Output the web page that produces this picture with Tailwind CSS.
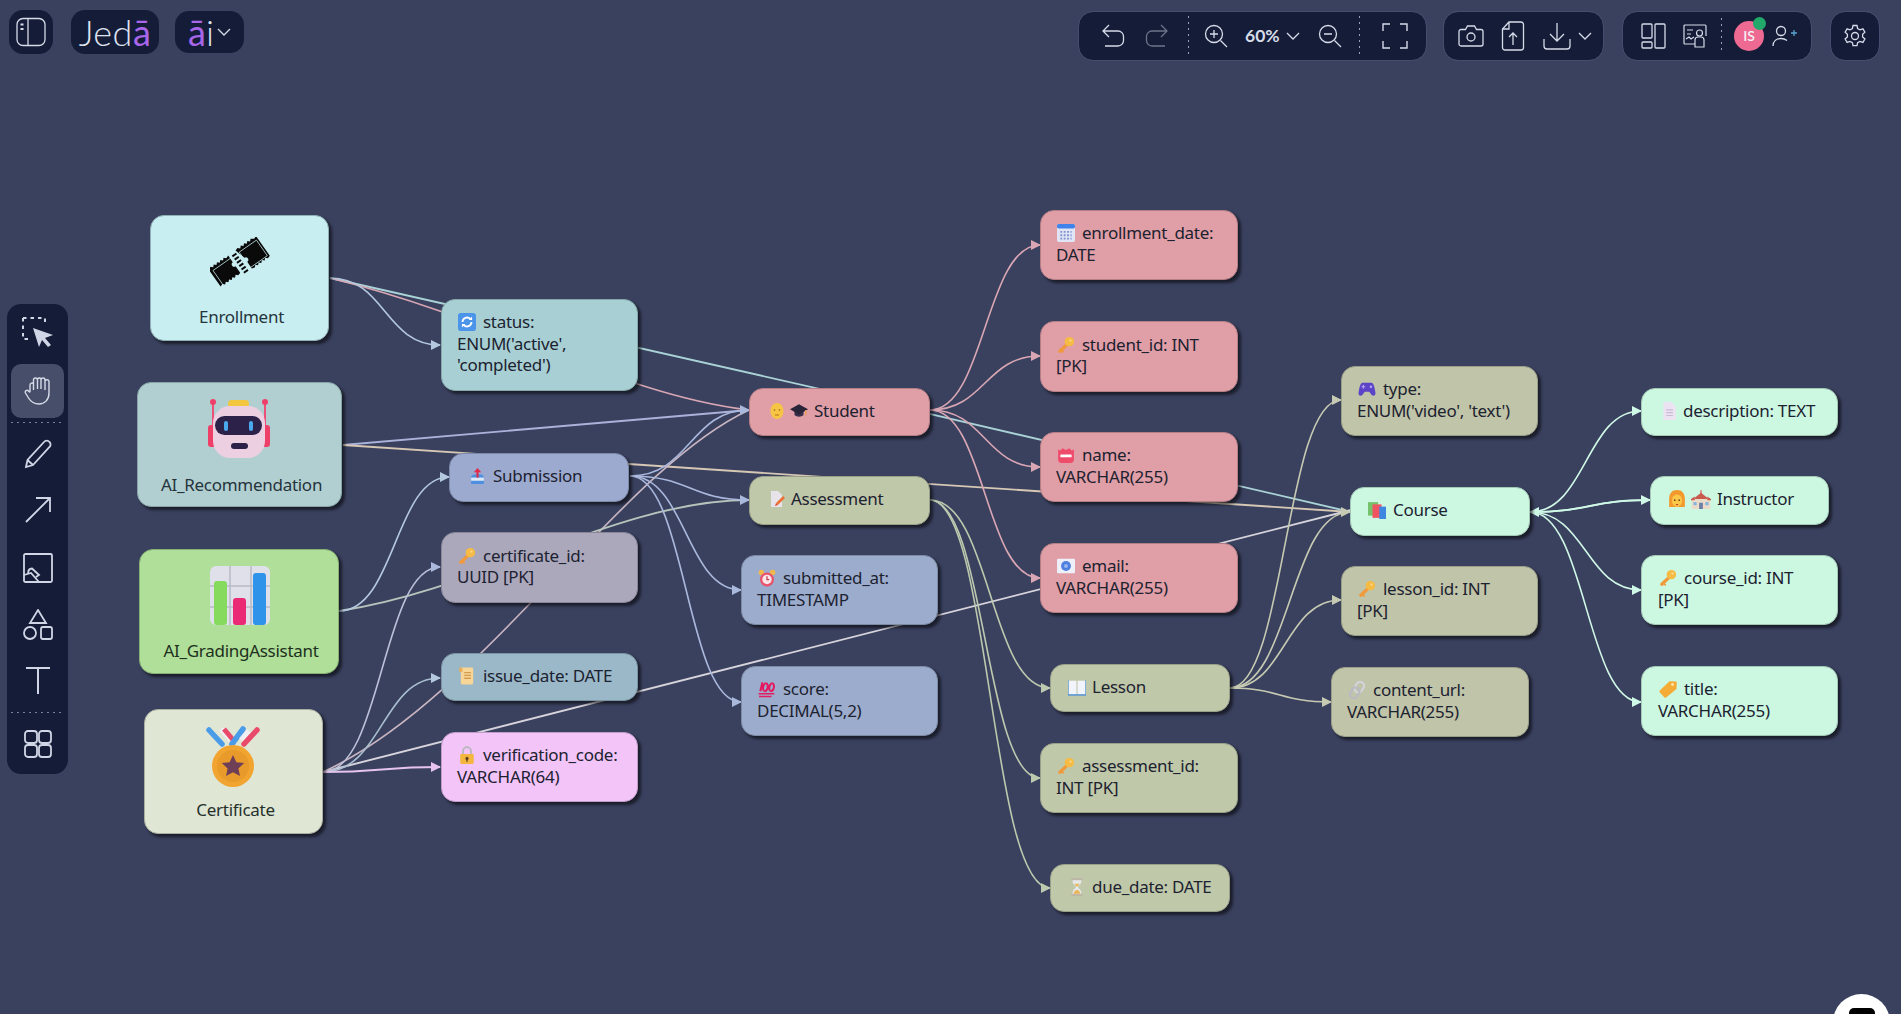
<!DOCTYPE html>
<html lang="en">
<head>
<meta charset="utf-8">
<title>Jedā</title>
<script src="https://cdn.jsdelivr.net/npm/@tailwindcss/browser@4"></script>
</head>
<body class="m-0">
<div class="relative w-[1901px] h-[1014px] overflow-hidden bg-[#3a415f] font-['Noto_Sans',sans-serif] text-[17px] tracking-[-0.28px] leading-[21.5px] text-[#1c2230]">

<!-- symbols -->
<svg class="absolute w-0 h-0">
<defs>
<symbol id="key" viewBox="0 0 16 16"><path d="M9.5 7 L2.5 13.5" stroke="#f09a3c" stroke-width="3" stroke-linecap="round" fill="none"/><path d="M4 12.5l2 2" stroke="#f09a3c" stroke-width="1.6"/><circle cx="11" cy="5" r="4.2" fill="#f6bb45"/><circle cx="12" cy="4" r="1" fill="#f9dc8c"/></symbol>
<symbol id="refresh" viewBox="0 0 16 16"><rect x="0" y="0" width="16" height="16" rx="2.5" fill="#4a94ea"/><path d="M4 8a4 4 0 0 1 7-2.6M12 8a4 4 0 0 1-7 2.6" stroke="#fff" stroke-width="1.6" fill="none"/><path d="M9.5 6.2h3v-3zM6.5 9.8h-3v3z" fill="#fff"/></symbol>
<symbol id="calendar" viewBox="0 0 16 16"><rect x="0" y="0" width="16" height="16" rx="1.5" fill="#dfe5f5"/><rect x="0" y="0" width="16" height="4" rx="1.5" fill="#3f82ea"/><path d="M3 7h10M3 10h10M3 13h10" stroke="#7f8fd0" stroke-width="1.6" stroke-dasharray="1.6 1.4"/></symbol>
<symbol id="scroll" viewBox="0 0 16 16"><rect x="2.5" y="0.5" width="11" height="15" rx="1" fill="#f6d597"/><rect x="1" y="0.5" width="3" height="4" rx="1.2" fill="#e7ae5c"/><path d="M5.5 5h6M5.5 7.5h6M5.5 10h6" stroke="#d49c52" stroke-width="1.2"/></symbol>
<symbol id="lock" viewBox="0 0 16 16"><path d="M4.5 8V4.5a3.5 3.5 0 0 1 7 0V8" stroke="#b8b8bc" stroke-width="1.6" fill="none"/><rect x="2" y="7" width="12" height="9" rx="1.3" fill="#f4b63e"/><circle cx="8" cy="11" r="1.4" fill="#5e4320"/><rect x="7.4" y="11" width="1.2" height="3" fill="#5e4320"/></symbol>
<symbol id="clock" viewBox="0 0 16 16"><circle cx="3" cy="3" r="2.4" fill="#f3b84c"/><circle cx="13" cy="3" r="2.4" fill="#f3b84c"/><circle cx="8" cy="9.3" r="6.2" fill="#e8526a"/><circle cx="8" cy="9.3" r="4.2" fill="#fbe6ea"/><path d="M8 6.5v3h2" stroke="#c43a52" stroke-width="1.1" fill="none"/></symbol>
<symbol id="hundred" viewBox="0 0 16 16"><path d="M2 10 L4 2 M6 10 a2 3.6 12 1 1 .1 0 M11.5 10 a2 3.6 12 1 1 .1 0" stroke="#e5195f" stroke-width="1.8" fill="none"/><path d="M0.5 12.2h14M1 14.6h11" stroke="#e5195f" stroke-width="1.3"/></symbol>
<symbol id="book" viewBox="0 0 16 16"><path d="M0.5 2.5h7v12h-7zM8.5 2.5h7v12h-7z" fill="#f1f4fa"/><path d="M0 14.5h16v1.2H0z" fill="#4a90e0"/><path d="M0 2v13M16 2v13" stroke="#4a90e0" stroke-width="1"/></symbol>
<symbol id="hourglass" viewBox="0 0 16 16"><path d="M3 1h10M3 15h10" stroke="#bdb7a6" stroke-width="1.8"/><path d="M4 2h8c0 4-3 4.500-3 6s3 2 3 6H4c0-4 3-4.500 3-6s-3-2-3-6z" fill="#e6e8ea"/><path d="M5.500 5h5l-2.500 3zM4.800 14c.5-2 2-3 3.200-3.500 1.200.5 2.700 1.500 3.200 3.500z" fill="#e9b759"/></symbol>
<symbol id="docpen" viewBox="0 0 16 16"><path d="M1 0h7l4 4v12H1z" fill="#e6e3ea"/><path d="M7 13 L14 6" stroke="#ee7035" stroke-width="2.6"/><path d="M5 15l1-3 2 2z" fill="#e44b2a"/></symbol>
<symbol id="face" viewBox="0 0 16 16"><ellipse cx="8" cy="8" rx="6.500" ry="8" fill="#f6c544"/><circle cx="5.500" cy="7" r=".8" fill="#8a5a20"/><circle cx="10.500" cy="7" r=".8" fill="#8a5a20"/><path d="M6 12h4" stroke="#b9721f" stroke-width="1"/></symbol>
<symbol id="cap" viewBox="0 0 16 16"><path d="M4 8v3.500c2 2 6 2 8 0V8z" fill="#3a2f4a"/><path d="M0 6.500 8 2l8 4.500L8 11z" fill="#2a2438"/><path d="M14 7v5" stroke="#e8a34a" stroke-width="1.100"/></symbol>
<symbol id="badge" viewBox="0 0 16 16"><path d="M1 3l2 1 2-2 3 1.500L11 2l2 2 2-1v9a3 3 0 0 1-3 3H4a3 3 0 0 1-3-3z" fill="#ef4c6b"/><rect x="3" y="7.500" width="10" height="2.600" rx=".6" fill="#fff"/></symbol>
<symbol id="globe" viewBox="0 0 16 16"><rect width="16" height="13" y="1.500" rx="1" fill="#edf0f8"/><circle cx="8" cy="8" r="4.400" fill="#4f7fdf"/><circle cx="8" cy="8" r="1.700" fill="#9cb9f0"/></symbol>
<symbol id="gamepad" viewBox="0 0 16 16"><path d="M4 2.500h8c2 0 3 5 3.500 9 .3 2.500-2.500 3.500-4 1L10 10.500H6L4.500 12.500c-1.500 2.500-4.300 1.500-4-1 .5-4 1.500-9 3.500-9z" fill="#5b44c8"/><circle cx="11.500" cy="6" r="1.100" fill="#b9a6f4"/><path d="M3 6h3.500M4.750 4.300v3.500" stroke="#b9a6f4" stroke-width="1"/></symbol>
<symbol id="books" viewBox="0 0 16 16"><rect x="0" y="1" width="9" height="12" fill="#76c26a"/><rect x="4" y="3" width="8" height="12" fill="#ef5560"/><rect x="10" y="5" width="6" height="11" fill="#3f86e0"/></symbol>
<symbol id="link" viewBox="0 0 16 16"><rect x="6.500" y="0.500" width="7" height="10" rx="3.500" transform="rotate(30 10 5.500)" stroke="#d4d5dc" stroke-width="1.800" fill="none"/><rect x="2.500" y="5.500" width="7" height="10" rx="3.500" transform="rotate(30 6 10.500)" stroke="#b9bac4" stroke-width="1.800" fill="none"/></symbol>
<symbol id="doc" viewBox="0 0 16 16"><path d="M3 0h7l4 4v12H3z" fill="#ebe2f2"/><path d="M5.500 7h6M5.500 9.500h6M5.500 12h6" stroke="#c9bcd6" stroke-width="1.100"/></symbol>
<symbol id="woman" viewBox="0 0 16 16"><path d="M8 0c4.500 0 7 3 7 8v7H1V8c0-5 2.500-8 7-8z" fill="#f29a2e"/><ellipse cx="8" cy="9.500" rx="4.500" ry="5.500" fill="#fbc84a"/><circle cx="6" cy="9" r=".8" fill="#7a4a1c"/><circle cx="10" cy="9" r=".8" fill="#7a4a1c"/><path d="M7 13h2" stroke="#c23a2a" stroke-width="1"/></symbol>
<symbol id="school" viewBox="0 0 16 16"><path d="M8 1 v3" stroke="#e25a5a" stroke-width="1"/><path d="M3 7 8 3l5 4v2H3z" fill="#c95a4e"/><rect x="0.500" y="8" width="15" height="8" fill="#eadcc8"/><path d="M0 8 3 6v3H0zM16 8l-3-2v3h3z" fill="#c95a4e"/><rect x="6.500" y="11" width="3" height="5" fill="#6d7fa5"/><rect x="2" y="10.500" width="2.500" height="2.500" fill="#7fb5e0"/><rect x="11.500" y="10.500" width="2.500" height="2.500" fill="#7fb5e0"/></symbol>
<symbol id="tag" viewBox="0 0 16 16"><path d="M9 1h5.500a1 1 0 0 1 1 1v5.500L7 15.500a1.500 1.500 0 0 1-2 0L1 11.500a1.500 1.500 0 0 1 0-2z" fill="#f5ac36" transform="rotate(3 8 8)"/><circle cx="12" cy="4" r="1.300" fill="#fde4a6"/></symbol>
<symbol id="inbox" viewBox="0 0 12 16"><path d="M0 8l2-2h8l2 2v7H0z" fill="#4d8fe0"/><path d="M0 9h12v3H0z" fill="#dfe8f5"/><path d="M6 9V3" stroke="#e02b4c" stroke-width="2"/><path d="M2.500 4 6 0l3.500 4z" fill="#e02b4c"/></symbol>
<marker id="ap" viewBox="0 0 10 10" refX="9" refY="5" markerWidth="10" markerHeight="10" markerUnits="userSpaceOnUse" orient="auto"><path d="M0 0 10 5 0 10z" fill="#d9a6b4"/></marker>
<marker id="al" viewBox="0 0 10 10" refX="9" refY="5" markerWidth="10" markerHeight="10" markerUnits="userSpaceOnUse" orient="auto"><path d="M0 0 10 5 0 10z" fill="#aab8dc"/></marker>
<marker id="ab" viewBox="0 0 10 10" refX="9" refY="5" markerWidth="10" markerHeight="10" markerUnits="userSpaceOnUse" orient="auto"><path d="M0 0 10 5 0 10z" fill="#b4c8de"/></marker>
<marker id="ag" viewBox="0 0 10 10" refX="9" refY="5" markerWidth="10" markerHeight="10" markerUnits="userSpaceOnUse" orient="auto"><path d="M0 0 10 5 0 10z" fill="#bcc9ae"/></marker>
<marker id="at" viewBox="0 0 10 10" refX="9" refY="5" markerWidth="10" markerHeight="10" markerUnits="userSpaceOnUse" orient="auto"><path d="M0 0 10 5 0 10z" fill="#c6cab2"/></marker>
<marker id="am" viewBox="0 0 10 10" refX="9" refY="5" markerWidth="10" markerHeight="10" markerUnits="userSpaceOnUse" orient="auto"><path d="M0 0 10 5 0 10z" fill="#d0f8e6"/></marker>
<marker id="av" viewBox="0 0 10 10" refX="9" refY="5" markerWidth="10" markerHeight="10" markerUnits="userSpaceOnUse" orient="auto"><path d="M0 0 10 5 0 10z" fill="#e6c4ee"/></marker>
</defs>
</svg>

<!-- edges -->
<svg class="absolute left-0 top-0 w-[1901px] h-[1014px]" viewBox="0 0 1901 1014" fill="none" stroke-width="1.6">
<path d="M330 278 C700 360 1000 430 1351 512" stroke="#a9d3d6" stroke-width="1.900"/>
<path d="M330 278 C500 320 620 395 749 410" stroke="#d9a6b4"/>
<path d="M343 445 L749 410" stroke="#aab2da" stroke-width="1.900"/>
<path d="M343 445 L1351 512" stroke="#d6c8b4" stroke-width="1.900"/>
<path d="M323 772 L1351 510" stroke="#d8d4dc" stroke-width="1.900"/>
<path d="M323 772 C480 700 620 470 749 410" stroke="#c9b6c2"/>
<path d="M339 611 C480 590 620 500 749 500" stroke="#b6c4bc" stroke-width="1.900"/>
<path d="M330 278 C385 278 385 345 440 345" stroke="#b4c8de" marker-end="url(#ab)"/>
<path d="M339 611 C395 611 395 477 449 477" stroke="#b4c8de" marker-end="url(#ab)"/>
<path d="M323 772 C382 772 382 567 440 567" stroke="#bcc0d8" marker-end="url(#al)"/>
<path d="M323 772 C382 772 382 678 440 678" stroke="#a9bfd0" marker-end="url(#ab)"/>
<path d="M323 772 C382 772 382 767 440 767" stroke="#e6c4ee" stroke-width="1.900" marker-end="url(#av)"/>
<path d="M630 476 C690 476 690 410 749 410" stroke="#aab8dc" marker-end="url(#al)"/>
<path d="M630 476 C690 476 690 500 749 500" stroke="#aab8dc" marker-end="url(#al)"/>
<path d="M630 476 C686 476 686 590 741 590" stroke="#aab8dc" marker-end="url(#al)"/>
<path d="M630 476 C686 476 686 702 741 702" stroke="#aab8dc" marker-end="url(#al)"/>
<path d="M930 410 C985 410 985 245 1040 245" stroke="#d9a6b4" marker-end="url(#ap)"/>
<path d="M930 410 C985 410 985 356 1040 356" stroke="#d9a6b4" marker-end="url(#ap)"/>
<path d="M930 410 C985 410 985 467 1040 467" stroke="#d9a6b4" marker-end="url(#ap)"/>
<path d="M930 410 C985 410 985 578 1040 578" stroke="#d9a6b4" marker-end="url(#ap)"/>
<path d="M930 500 C990 500 990 688 1050 688" stroke="#bcc9ae" marker-end="url(#ag)"/>
<path d="M930 500 C985 500 985 778 1040 778" stroke="#bcc9ae" marker-end="url(#ag)"/>
<path d="M930 500 C990 500 990 888 1050 888" stroke="#bcc9ae" marker-end="url(#ag)"/>
<path d="M1230 688 C1285 688 1285 400 1341 400" stroke="#c6cab2" marker-end="url(#at)"/>
<path d="M1230 688 C1290 688 1290 512 1350 512" stroke="#c6cab2" marker-end="url(#at)"/>
<path d="M1230 688 C1285 688 1285 600 1341 600" stroke="#c6cab2" marker-end="url(#at)"/>
<path d="M1230 688 C1280 688 1280 702 1331 702" stroke="#c6cab2" marker-end="url(#at)"/>
<path d="M1530 512 C1586 512 1586 411 1641 411" stroke="#d0f8e6" marker-end="url(#am)"/>
<path d="M1530 512 C1590 512 1590 500 1650 500" stroke="#d0f8e6" stroke-width="1.900" marker-end="url(#am)"/>
<path d="M1650 500 C1590 500 1590 512 1530 512" stroke="#d0f8e6" marker-end="url(#am)"/>
<path d="M1530 512 C1586 512 1586 590 1641 590" stroke="#d0f8e6" marker-end="url(#am)"/>
<path d="M1530 512 C1586 512 1586 702 1641 702" stroke="#d0f8e6" marker-end="url(#am)"/>
</svg>

<!-- big nodes -->
<div class="absolute left-[150px] top-[215px] w-[179px] h-[126px] rounded-[14px] bg-[#c9eef2] border border-[#8fb0b4] shadow-[3px_3px_3px_rgba(0,0,0,0.55)] flex flex-col items-center pt-[21px] pl-[4px] text-[#25343c]">
<svg class="w-[60px] h-[50px] -ml-[4px]" viewBox="0 0 60 50"><g transform="rotate(-35 30 25)"><path d="M0 14l3-2 2 2 2-2 2 2 2-2 2 2 2-2 2 2 2-2 2 2 3-1v8a2.500 2.500 0 0 0 0 5v8l-3 1-2-2-2 2-2-2-2 2-2-2-2 2-2-2-2 2-2-2-3 1z" fill="#0a0a0a"/><path d="M33 13l3-1 2 2 2-2 2 2 2-2 2 2 2-2 2 2 2-2 3 2 3-1v24l-3 1-2-2-2 2-2-2-2 2-2-2-2 2-2-2-2 2-3-1v-8a2.500 2.500 0 0 0 0-5z" fill="#0a0a0a"/><path d="M3 16.500h22v19H3zM35 16.500h21v19H35z" stroke="#c9eef2" stroke-width=".7" fill="none"/><path d="M29.500 15v22" stroke="#0a0a0a" stroke-width="5" stroke-dasharray="2 2"/></g></svg>
<span class="mt-[19px]">Enrollment</span></div>

<div class="absolute left-[137px] top-[382px] w-[205px] h-[125px] rounded-[14px] bg-[#b1cfd0] border border-[#88a4a6] shadow-[3px_3px_3px_rgba(0,0,0,0.55)] flex flex-col items-center pt-[15px] pl-[4px] text-[#25343c]">
<svg class="w-[62px] h-[62px] -ml-[5px]" viewBox="0 0 62 62"><path d="M5 6v40M57 6v40" stroke="#ee4f78" stroke-width="2"/><circle cx="5" cy="4" r="3" fill="#ee3f68"/><circle cx="57" cy="4" r="3" fill="#ee3f68"/><rect x="0" y="27" width="8" height="22" rx="3" fill="#ee3f68"/><rect x="54" y="27" width="8" height="22" rx="3" fill="#ee3f68"/><rect x="20" y="2" width="21" height="7" rx="3.500" fill="#f3c63f"/><rect x="5" y="8" width="52" height="52" rx="17" fill="#eccfe0"/><rect x="7" y="18" width="47" height="19" rx="9.500" fill="#2c2149"/><rect x="16" y="23" width="4" height="10" rx="2" fill="#4aa9ee"/><rect x="41" y="23" width="4" height="10" rx="2" fill="#4aa9ee"/><rect x="23" y="45" width="17" height="6" rx="3" fill="#2c2149"/></svg>
<span class="mt-[14px]">AI_Recommendation</span></div>

<div class="absolute left-[139px] top-[549px] w-[200px] h-[125px] rounded-[14px] bg-[#afdf98] border border-[#87b074] shadow-[3px_3px_3px_rgba(0,0,0,0.55)] flex flex-col items-center pt-[16px] pl-[4px] text-[#1e3020]">
<svg class="w-[60px] h-[60px] -ml-[3px]" viewBox="0 0 60 60"><rect width="60" height="59" rx="6" fill="#dfe0ea"/><path d="M20 0v59M41 0v59M0 20h60M0 41h60" stroke="#b8b9c6" stroke-width="1.500"/><rect x="4" y="15" width="13" height="44" rx="3" fill="#86db5e"/><rect x="23" y="32" width="13" height="27" rx="3" fill="#ea2a72"/><rect x="43" y="7" width="13" height="52" rx="3" fill="#2f93ea"/></svg>
<span class="mt-[14px]">AI_GradingAssistant</span></div>

<div class="absolute left-[144px] top-[709px] w-[179px] h-[125px] rounded-[14px] bg-[#e0e6d4] border border-[#a9aea0] shadow-[3px_3px_3px_rgba(0,0,0,0.55)] flex flex-col items-center pt-[16px] pl-[4px] text-[#25302c]">
<svg class="w-[56px] h-[62px] -ml-[6px]" viewBox="0 0 56 62"><path d="M4 4 L17 18" stroke="#4a9ce8" stroke-width="5.500" stroke-linecap="round"/><path d="M16 3 L26 14" stroke="#f0f0f4" stroke-width="5"/><path d="M19 3 L29 15" stroke="#ea4a6a" stroke-width="5"/><path d="M38 3 L27 18" stroke="#4a9ce8" stroke-width="5.500" stroke-linecap="round"/><path d="M44 5 L36 14" stroke="#f0f0f4" stroke-width="5"/><path d="M52 4 L39 18" stroke="#ea4a6a" stroke-width="5.500" stroke-linecap="round"/><circle cx="28" cy="40" r="21" fill="#f1a430"/><circle cx="28" cy="40" r="16" fill="#e89a2a"/><path d="M28 29l3.400 7.200 7.800.9-5.800 5.300 1.600 7.700-7-3.900-7 3.900 1.600-7.700-5.800-5.300 7.800-.9z" fill="#6f3f58"/></svg>
<span class="mt-[11px]">Certificate</span></div>

<!-- column 2 -->
<div class="absolute left-[441px] top-[299px] w-[197px] h-[92px] rounded-[14px] bg-[#a8d0d4] border border-[#86a8aa] shadow-[3px_3px_3px_rgba(0,0,0,0.55)] flex items-center pl-[15px] pb-[3px]"><div><svg class="inline-block w-[18px] h-[18px] ml-[1px] mr-[7px] align-[-3px]"><use href="#refresh"/></svg>status:<br>ENUM('active',<br>'completed')</div></div>

<div class="absolute left-[449px] top-[453px] w-[180px] h-[49px] rounded-[14px] bg-[#9caad0] border border-[#7c88a8] shadow-[3px_3px_3px_rgba(0,0,0,0.55)] flex items-center pl-[21px] pb-[3px]"><svg class="w-[13px] h-[17px] mr-[9px]"><use href="#inbox"/></svg>Submission</div>

<div class="absolute left-[441px] top-[532px] w-[197px] h-[71px] rounded-[14px] bg-[#aca8bc] border border-[#8a8698] shadow-[3px_3px_3px_rgba(0,0,0,0.55)] flex items-center pl-[15px] pb-[3px]"><div><svg class="inline-block w-[18px] h-[18px] ml-[1px] mr-[7px] align-[-3px]"><use href="#key"/></svg>certificate_id:<br>UUID [PK]</div></div>

<div class="absolute left-[441px] top-[653px] w-[197px] h-[48px] rounded-[14px] bg-[#9ab8c8] border border-[#7a94a2] shadow-[3px_3px_3px_rgba(0,0,0,0.55)] flex items-center pl-[16px] pb-[3px]"><svg class="w-[18px] h-[18px] mr-[7px]"><use href="#scroll"/></svg>issue_date: DATE</div>

<div class="absolute left-[441px] top-[732px] w-[197px] h-[70px] rounded-[14px] bg-[#f2c4f8] border border-[#c29cc8] shadow-[3px_3px_3px_rgba(0,0,0,0.55)] flex items-center pl-[15px] pb-[3px]"><div><svg class="inline-block w-[18px] h-[18px] ml-[1px] mr-[7px] align-[-3px]"><use href="#lock"/></svg>verification_code:<br>VARCHAR(64)</div></div>

<!-- column 3 -->
<div class="absolute left-[749px] top-[388px] w-[181px] h-[48px] rounded-[14px] bg-[#e09ea6] border border-[#b47e86] shadow-[3px_3px_3px_rgba(0,0,0,0.55)] flex items-center pl-[19px] pb-[3px]"><svg class="w-[16px] h-[18px] mr-[5px]"><use href="#face"/></svg><svg class="w-[18px] h-[18px] mr-[6px]"><use href="#cap"/></svg>Student</div>

<div class="absolute left-[749px] top-[476px] w-[181px] h-[49px] rounded-[14px] bg-[#c0c8aa] border border-[#9aa088] shadow-[3px_3px_3px_rgba(0,0,0,0.55)] flex items-center pl-[20px] pb-[3px]"><svg class="w-[16px] h-[18px] mr-[5px]"><use href="#docpen"/></svg>Assessment</div>

<div class="absolute left-[741px] top-[555px] w-[197px] h-[70px] rounded-[14px] bg-[#9caccc] border border-[#7c8aa4] shadow-[3px_3px_3px_rgba(0,0,0,0.55)] flex items-center pl-[15px] pb-[3px]"><div><svg class="inline-block w-[18px] h-[18px] ml-[1px] mr-[7px] align-[-3px]"><use href="#clock"/></svg>submitted_at:<br>TIMESTAMP</div></div>

<div class="absolute left-[741px] top-[666px] w-[197px] h-[70px] rounded-[14px] bg-[#9caccc] border border-[#7c8aa4] shadow-[3px_3px_3px_rgba(0,0,0,0.55)] flex items-center pl-[15px] pb-[3px]"><div><svg class="inline-block w-[18px] h-[18px] ml-[1px] mr-[7px] align-[-3px]"><use href="#hundred"/></svg>score:<br>DECIMAL(5,2)</div></div>

<!-- column 4 -->
<div class="absolute left-[1040px] top-[210px] w-[198px] h-[70px] rounded-[14px] bg-[#e09ea6] border border-[#b47e86] shadow-[3px_3px_3px_rgba(0,0,0,0.55)] flex items-center pl-[15px] pb-[3px]"><div><svg class="inline-block w-[18px] h-[18px] ml-[1px] mr-[7px] align-[-3px]"><use href="#calendar"/></svg>enrollment_date:<br>DATE</div></div>

<div class="absolute left-[1040px] top-[321px] w-[198px] h-[71px] rounded-[14px] bg-[#e09ea6] border border-[#b47e86] shadow-[3px_3px_3px_rgba(0,0,0,0.55)] flex items-center pl-[15px] pb-[3px]"><div><svg class="inline-block w-[18px] h-[18px] ml-[1px] mr-[7px] align-[-3px]"><use href="#key"/></svg>student_id: INT<br>[PK]</div></div>

<div class="absolute left-[1040px] top-[432px] w-[198px] h-[70px] rounded-[14px] bg-[#e09ea6] border border-[#b47e86] shadow-[3px_3px_3px_rgba(0,0,0,0.55)] flex items-center pl-[15px] pb-[3px]"><div><svg class="inline-block w-[18px] h-[18px] ml-[1px] mr-[7px] align-[-3px]"><use href="#badge"/></svg>name:<br>VARCHAR(255)</div></div>

<div class="absolute left-[1040px] top-[543px] w-[198px] h-[70px] rounded-[14px] bg-[#e09ea6] border border-[#b47e86] shadow-[3px_3px_3px_rgba(0,0,0,0.55)] flex items-center pl-[15px] pb-[3px]"><div><svg class="inline-block w-[18px] h-[18px] ml-[1px] mr-[7px] align-[-3px]"><use href="#globe"/></svg>email:<br>VARCHAR(255)</div></div>

<div class="absolute left-[1050px] top-[664px] w-[180px] h-[48px] rounded-[14px] bg-[#c0c8aa] border border-[#9aa088] shadow-[3px_3px_3px_rgba(0,0,0,0.55)] flex items-center pl-[17px] pb-[3px]"><svg class="w-[18px] h-[18px] mr-[6px]"><use href="#book"/></svg>Lesson</div>

<div class="absolute left-[1040px] top-[743px] w-[198px] h-[70px] rounded-[14px] bg-[#c0c8aa] border border-[#9aa088] shadow-[3px_3px_3px_rgba(0,0,0,0.55)] flex items-center pl-[15px] pb-[3px]"><div><svg class="inline-block w-[18px] h-[18px] ml-[1px] mr-[7px] align-[-3px]"><use href="#key"/></svg>assessment_id:<br>INT [PK]</div></div>

<div class="absolute left-[1050px] top-[864px] w-[180px] h-[48px] rounded-[14px] bg-[#c0c8aa] border border-[#9aa088] shadow-[3px_3px_3px_rgba(0,0,0,0.55)] flex items-center pl-[17px] pb-[3px]"><svg class="w-[18px] h-[18px] mr-[6px]"><use href="#hourglass"/></svg>due_date: DATE</div>

<!-- column 5 -->
<div class="absolute left-[1341px] top-[366px] w-[197px] h-[70px] rounded-[14px] bg-[#c0c4a8] border border-[#9a9e88] shadow-[3px_3px_3px_rgba(0,0,0,0.55)] flex items-center pl-[15px] pb-[3px]"><div><svg class="inline-block w-[18px] h-[18px] ml-[1px] mr-[7px] align-[-3px]"><use href="#gamepad"/></svg>type:<br>ENUM('video', 'text')</div></div>

<div class="absolute left-[1350px] top-[487px] w-[180px] h-[49px] rounded-[14px] bg-[#ccf8e2] border border-[#a4c8b6] shadow-[3px_3px_3px_rgba(0,0,0,0.55)] flex items-center pl-[17px] pb-[3px]"><svg class="w-[18px] h-[18px] mr-[7px]"><use href="#books"/></svg>Course</div>

<div class="absolute left-[1341px] top-[566px] w-[197px] h-[70px] rounded-[14px] bg-[#c0c4a8] border border-[#9a9e88] shadow-[3px_3px_3px_rgba(0,0,0,0.55)] flex items-center pl-[15px] pb-[3px]"><div><svg class="inline-block w-[18px] h-[18px] ml-[1px] mr-[7px] align-[-3px]"><use href="#key"/></svg>lesson_id: INT<br>[PK]</div></div>

<div class="absolute left-[1331px] top-[667px] w-[198px] h-[70px] rounded-[14px] bg-[#c0c4a8] border border-[#9a9e88] shadow-[3px_3px_3px_rgba(0,0,0,0.55)] flex items-center pl-[15px] pb-[3px]"><div><svg class="inline-block w-[18px] h-[18px] ml-[1px] mr-[7px] align-[-3px]"><use href="#link"/></svg>content_url:<br>VARCHAR(255)</div></div>

<!-- column 6 -->
<div class="absolute left-[1641px] top-[388px] w-[197px] h-[48px] rounded-[14px] bg-[#ccf8e2] border border-[#a4c8b6] shadow-[3px_3px_3px_rgba(0,0,0,0.55)] flex items-center pl-[18px] pb-[3px]"><svg class="w-[18px] h-[18px] mr-[5px]"><use href="#doc"/></svg>description: TEXT</div>

<div class="absolute left-[1650px] top-[476px] w-[179px] h-[49px] rounded-[14px] bg-[#ccf8e2] border border-[#a4c8b6] shadow-[3px_3px_3px_rgba(0,0,0,0.55)] flex items-center pl-[17px] pb-[3px]"><svg class="w-[18px] h-[18px] mr-[5px]"><use href="#woman"/></svg><svg class="w-[20px] h-[20px] mr-[6px]"><use href="#school"/></svg>Instructor</div>

<div class="absolute left-[1641px] top-[555px] w-[197px] h-[70px] rounded-[14px] bg-[#ccf8e2] border border-[#a4c8b6] shadow-[3px_3px_3px_rgba(0,0,0,0.55)] flex items-center pl-[16px] pb-[3px]"><div><svg class="inline-block w-[18px] h-[18px] ml-[1px] mr-[7px] align-[-3px]"><use href="#key"/></svg>course_id: INT<br>[PK]</div></div>

<div class="absolute left-[1641px] top-[666px] w-[197px] h-[70px] rounded-[14px] bg-[#ccf8e2] border border-[#a4c8b6] shadow-[3px_3px_3px_rgba(0,0,0,0.55)] flex items-center pl-[16px] pb-[3px]"><div><svg class="inline-block w-[18px] h-[18px] ml-[1px] mr-[7px] align-[-3px]"><use href="#tag"/></svg>title:<br>VARCHAR(255)</div></div>

<!-- top bar -->
<div class="absolute inset-x-0 top-0 flex items-start justify-between pl-[9px] pr-[22px] pt-[10px] text-[#d6dbe8] tracking-normal">
  <div class="flex items-start">
    <div class="w-[44px] h-[44px] rounded-[14px] bg-[#141c38] flex items-center justify-center">
      <svg class="w-[30px] h-[30px]" viewBox="0 0 30 30" fill="none" stroke="#d6dbe8" stroke-width="1.300"><rect x="1" y="1.500" width="28" height="27" rx="6"/><path d="M12 1.500v27"/><path d="M4.500 7.500h3M4.500 12h3" stroke-width="2"/></svg>
    </div>
    <div class="ml-[18px] w-[88px] h-[44px] rounded-[14px] bg-[#141c38] flex items-center justify-center font-['Lato',sans-serif] font-light text-[36px] leading-none tracking-[0.5px] text-[#dfe3f0]">Jed<span class="text-[#a866e8] font-normal">ā</span></div>
    <div class="ml-[16px] mt-[1px] w-[69px] h-[42px] rounded-[14px] bg-[#141c38] flex items-center justify-center font-['Lato',sans-serif] font-light text-[36px] leading-none text-[#dfe3f0]"><span class="text-[#a866e8] font-normal">ā</span>i<svg class="w-[14px] h-[8px] ml-[3px]" viewBox="0 0 14 8" fill="none" stroke="#d6dbe8" stroke-width="1.300"><path d="M1 1l6 6 6-6"/></svg></div>
  </div>
  <div class="flex items-start mt-[2px]">
    <div class="w-[347px] h-[48px] rounded-[14px] bg-[#141c38] outline outline-[#454d6e] flex items-center pl-[22px]">
      <svg class="w-[24px] h-[24px]" viewBox="0 0 24 24" fill="none" stroke="#d6dbe8" stroke-width="1.300"><path d="M8 1 2 7l6 6M2 7h15a5.500 5.500 0 0 1 5.500 5.500v4A5.500 5.500 0 0 1 17 22H4"/></svg>
      <svg class="ml-[20px] w-[24px] h-[24px]" viewBox="0 0 24 24" fill="none" stroke="#6d7388" stroke-width="1.300"><path d="M16 1l6 6-6 6M22 7H7a5.500 5.500 0 0 0-5.500 5.500v4A5.500 5.500 0 0 0 7 22h13"/></svg>
      <div class="ml-[19px] w-px h-[40px] bg-[repeating-linear-gradient(to_bottom,#9aa0b4_0_2px,transparent_2px_6px)]"></div>
      <svg class="ml-[15px] w-[24px] h-[24px]" viewBox="0 0 24 24" fill="none" stroke="#d6dbe8" stroke-width="1.300"><circle cx="10" cy="10" r="8.500"/><path d="M16.500 16.500 23 23M6 10h8M10 6v8"/></svg>
      <span class="ml-[17px] font-['Lato',sans-serif] font-bold text-[17.5px] text-[#d6dbe8]">60%</span>
      <svg class="ml-[6px] w-[14px] h-[8px]" viewBox="0 0 14 8" fill="none" stroke="#d6dbe8" stroke-width="1.300"><path d="M1 1l6 6 6-6"/></svg>
      <svg class="ml-[18px] w-[24px] h-[24px]" viewBox="0 0 24 24" fill="none" stroke="#d6dbe8" stroke-width="1.300"><circle cx="10" cy="10" r="8.500"/><path d="M16.500 16.500 23 23M6 10h8"/></svg>
      <div class="ml-[17px] w-px h-[40px] bg-[repeating-linear-gradient(to_bottom,#9aa0b4_0_2px,transparent_2px_6px)]"></div>
      <svg class="ml-[22px] w-[26px] h-[26px]" viewBox="0 0 26 26" fill="none" stroke="#d6dbe8" stroke-width="1.400"><path d="M8 1H1v7M18 1h7v7M8 25H1v-7M18 25h7v-7"/></svg>
    </div>
    <div class="ml-[18px] w-[159px] h-[48px] rounded-[14px] bg-[#141c38] outline outline-[#454d6e] flex items-center pl-[14px]">
      <svg class="w-[26px] h-[22px]" viewBox="0 0 26 22" fill="none" stroke="#d6dbe8" stroke-width="1.300"><path d="M3 4.500h4.500l2-3.500h7l2 3.500H23a2 2 0 0 1 2 2V19a2 2 0 0 1-2 2H3a2 2 0 0 1-2-2V6.500a2 2 0 0 1 2-2z"/><circle cx="13" cy="12" r="4"/></svg>
      <svg class="ml-[17px] w-[24px] h-[30px]" viewBox="0 0 24 30" fill="none" stroke="#d6dbe8" stroke-width="1.300"><path d="M8 1h12a2.500 2.500 0 0 1 2.500 2.500v23a2.500 2.500 0 0 1-2.500 2.500H4a2.500 2.500 0 0 1-2.500-2.500V8zM8 1v7H1.500M12 24V12M8 16l4-4 4 4"/></svg>
      <svg class="ml-[18px] w-[28px] h-[28px]" viewBox="0 0 28 28" fill="none" stroke="#d6dbe8" stroke-width="1.300"><path d="M14 1v17M7 12l7 7 7-7M1 17v7a3 3 0 0 0 3 3h20a3 3 0 0 0 3-3v-7"/></svg>
      <svg class="ml-[7px] w-[14px] h-[8px]" viewBox="0 0 14 8" fill="none" stroke="#d6dbe8" stroke-width="1.300"><path d="M1 1l6 6 6-6"/></svg>
    </div>
    <div class="ml-[20px] w-[188px] h-[48px] rounded-[14px] bg-[#141c38] outline outline-[#454d6e] flex items-center pl-[18px]">
      <svg class="w-[25px] h-[26px]" viewBox="0 0 25 26" fill="none" stroke="#d6dbe8" stroke-width="1.300"><rect x="1" y="1" width="10" height="14" rx="1"/><rect x="1" y="19" width="10" height="6" rx="1"/><rect x="14" y="1" width="10" height="24" rx="1"/></svg>
      <svg class="ml-[17px] w-[24px] h-[24px]" viewBox="0 0 24 24" fill="none" stroke="#d6dbe8" stroke-width="1.200"><path d="M12 20H2a1 1 0 0 1-1-1V2a1 1 0 0 1 1-1h20a1 1 0 0 1 1 1v10"/><path d="M4 6h6M4 10h4M3 15l3-2 2 2 3-2"/><circle cx="16.500" cy="9" r="3"/><path d="M12 23v-7a3 3 0 0 1 3-3h3a3 3 0 0 1 3 3v7z"/></svg>
      <div class="ml-[14px] w-px h-[36px] bg-[repeating-linear-gradient(to_bottom,#9aa0b4_0_2px,transparent_2px_6px)]"></div>
      <div class="relative ml-[12px] w-[30px] h-[30px] rounded-full bg-[#ee6a93] flex items-center justify-center font-['Lato',sans-serif] text-[14px] font-semibold text-[#f5f0f4]">IS<span class="absolute -right-[2px] -top-[4px] w-[13px] h-[13px] rounded-full bg-[#22a86b]"></span></div>
      <svg class="ml-[8px] w-[26px] h-[22px]" viewBox="0 0 26 22" fill="none" stroke="#d6dbe8" stroke-width="1.300"><circle cx="9" cy="6" r="4.500"/><path d="M1 21c0-5 3.500-7.500 8-7.500 2 0 4 .5 6 2"/><path d="M19 8h6M22 5v6" stroke="#5aa6d0"/></svg>
    </div>
    <div class="ml-[20px] w-[48px] h-[48px] rounded-[14px] bg-[#141c38] outline outline-[#454d6e] flex items-center justify-center">
      <svg class="w-[24px] h-[24px]" viewBox="0 0 24 24" fill="none" stroke="#d6dbe8" stroke-width="1.300"><path d="M10 1.500h4l.6 3 2.400 1.300 2.900-1 2 3.400-2.300 2 0 2.800 2.300 2-2 3.400-2.900-1-2.400 1.300-.6 3h-4l-.6-3-2.400-1.300-2.900 1-2-3.400 2.300-2 0-2.800-2.300-2 2-3.400 2.900 1 2.400-1.300z"/><circle cx="12" cy="12" r="3.500"/></svg>
    </div>
  </div>
</div>

<!-- left toolbar -->
<div class="absolute left-[7px] top-[304px] w-[61px] h-[470px] rounded-[14px] bg-[#141c38] flex flex-col items-center pt-[13px]">
  <svg class="w-[32px] h-[32px]" viewBox="0 0 32 32" fill="none" stroke="#d0d6e6" stroke-width="2"><path d="M1 1h22v8M1 1v21h8" stroke-dasharray="3.500 4"/><path d="M11 11l20 7-8 3 6 7-3 2-6-7-3 7z" fill="#d0d6e6" stroke="none"/></svg>
  <div class="mt-[15px] w-[53px] h-[54px] rounded-[10px] bg-[#474e6a] flex items-center justify-center">
    <svg class="w-[28px] h-[30px]" viewBox="0 0 28 30" fill="none" stroke="#d6dbe8" stroke-width="1.400"><path d="M6 16V9a2 2 0 0 1 3.500-1.300V4a2 2 0 0 1 4 0V3a2 2 0 0 1 3.500 0v1a2 2 0 0 1 4 0v1.500a2 2 0 0 1 4 .5v11c0 7-4.500 11-10 11-5 0-8-2-10.500-6L1.500 17c-1-2 1.500-3.500 3-2L6 16.500M9.500 7.700V14M13.500 4v9M17 4v9M21 5.500V14"/></svg>
  </div>
  <div class="mt-[4px] w-[53px] h-px bg-[repeating-linear-gradient(to_right,#7a8096_0_2px,transparent_2px_6px)]"></div>
  <svg class="mt-[16px] w-[28px] h-[30px]" viewBox="0 0 28 30" fill="none" stroke="#d0d6e6" stroke-width="1.800"><path d="M2 28l1.500-7L20 3a3.500 3.500 0 0 1 5.500 0 3.500 3.500 0 0 1 0 5L9 26z"/><path d="M3.500 21 9 26"/></svg>
  <svg class="mt-[28px] w-[26px] h-[26px]" viewBox="0 0 26 26" fill="none" stroke="#d0d6e6" stroke-width="1.800"><path d="M1 25 25 1M11 1h14v14"/></svg>
  <svg class="mt-[30px] w-[30px] h-[30px]" viewBox="0 0 30 30" fill="none" stroke="#d0d6e6" stroke-width="1.800"><rect x="1" y="1" width="28" height="28" rx="1.500"/><path d="M1 22l7-2 8 9M5 21c0-4 2-5.500 4-5.500l7 6.500-3 2" stroke-width="1.800"/></svg>
  <svg class="mt-[26px] w-[30px] h-[32px]" viewBox="0 0 30 32" fill="none" stroke="#d0d6e6" stroke-width="1.800"><path d="M15 1l8 13H7z"/><circle cx="7" cy="24" r="6"/><rect x="18" y="18" width="11" height="12" rx="2"/></svg>
  <svg class="mt-[26px] w-[26px] h-[28px]" viewBox="0 0 26 28" fill="none" stroke="#d0d6e6" stroke-width="2"><path d="M1 1h24M13 1v26"/></svg>
  <div class="mt-[17px] w-[53px] h-px bg-[repeating-linear-gradient(to_right,#7a8096_0_2px,transparent_2px_6px)]"></div>
  <svg class="mt-[17px] w-[28px] h-[28px]" viewBox="0 0 28 28" fill="none" stroke="#d0d6e6" stroke-width="1.800"><rect x="1" y="1" width="12" height="12" rx="3"/><rect x="15" y="1" width="12" height="12" rx="3"/><rect x="1" y="15" width="12" height="12" rx="3"/><rect x="15" y="15" width="12" height="12" rx="3"/></svg>
</div>

<!-- help bubble -->
<div class="absolute left-[1833px] top-[994px] w-[57px] h-[57px] rounded-full bg-white flex justify-center pt-[14px]"><div class="w-[26px] h-[26px] rounded-[5px] bg-black"></div></div>
</div>
</body>
</html>
